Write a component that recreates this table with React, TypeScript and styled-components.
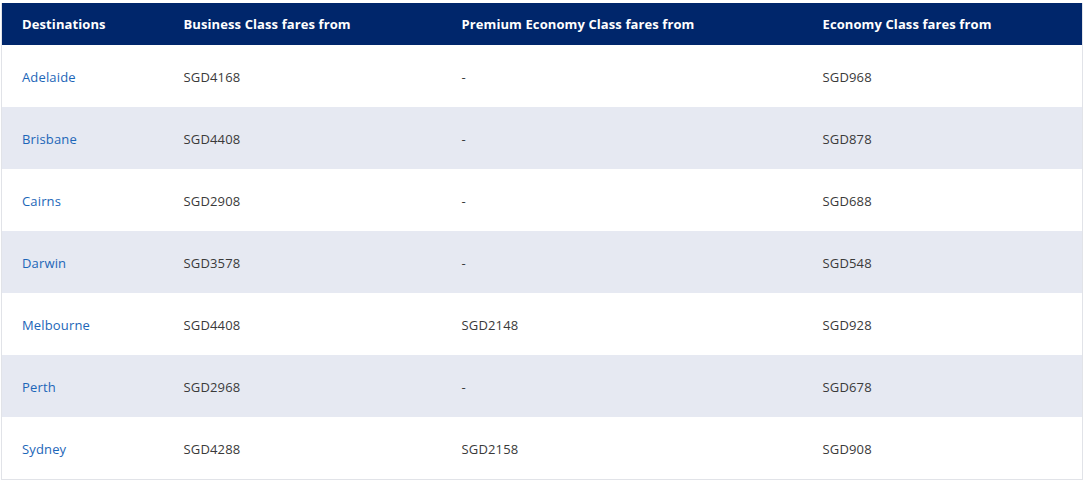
import React from "react";
import styled, { createGlobalStyle } from "styled-components";

const Global = createGlobalStyle`
  html, body { margin: 0; padding: 0; background: #ffffff; }
  body { font-family: "Open Sans", "Liberation Sans", Arial, sans-serif; }
`;

const Page = styled.div`
  padding: 3px 4px 0 1px;
`;

const Table = styled.table`
  width: 1082px;
  border-collapse: collapse;
  border: 1px solid #e1e3e8;
  border-top: none;
  table-layout: fixed;
`;

const HeadRow = styled.tr`
  background: #00266b;
  height: 42px;
`;

const Th = styled.th<{ $w?: number; $pad?: number }>`
  box-sizing: border-box;
  width: ${(p) => (p.$w ? `${p.$w}px` : "auto")};
  text-align: left;
  padding: 0 0 0 ${(p) => p.$pad ?? 20}px;
  color: #ffffff;
  font-size: 13px;
  font-weight: 700;
  letter-spacing: 0.1px;
  vertical-align: middle;
`;

const Row = styled.tr<{ $alt: boolean }>`
  height: 62px;
  background: ${(p) => (p.$alt ? "#e6e9f2" : "#ffffff")};
`;

const Td = styled.td<{ $pad?: number }>`
  box-sizing: border-box;
  padding: 2px 0 0 ${(p) => p.$pad ?? 20}px;
  font-size: 13px;
  color: #3a3a3a;
  letter-spacing: 0.15px;
  vertical-align: middle;
`;

const Dest = styled.a`
  color: #1c66b8;
  text-decoration: none;
  font-size: 13px;
`;

const data = [
  ["Adelaide", "SGD4168", "-", "SGD968"],
  ["Brisbane", "SGD4408", "-", "SGD878"],
  ["Cairns", "SGD2908", "-", "SGD688"],
  ["Darwin", "SGD3578", "-", "SGD548"],
  ["Melbourne", "SGD4408", "SGD2148", "SGD928"],
  ["Perth", "SGD2968", "-", "SGD678"],
  ["Sydney", "SGD4288", "SGD2158", "SGD908"],
];

export default function App() {
  return (
    <Page>
      <Global />
      <Table>
        <thead>
          <HeadRow>
            <Th $w={162} $pad={20}>Destinations</Th>
            <Th $w={278}>Business Class fares from</Th>
            <Th $w={361}>Premium Economy Class fares from</Th>
            <Th>Economy Class fares from</Th>
          </HeadRow>
        </thead>
        <tbody>
          {data.map((r, i) => (
            <Row key={r[0]} $alt={i % 2 === 1}>
              <Td $pad={20}>
                <Dest href="#">{r[0]}</Dest>
              </Td>
              <Td>{r[1]}</Td>
              <Td>{r[2]}</Td>
              <Td>{r[3]}</Td>
            </Row>
          ))}
        </tbody>
      </Table>
    </Page>
  );
}
